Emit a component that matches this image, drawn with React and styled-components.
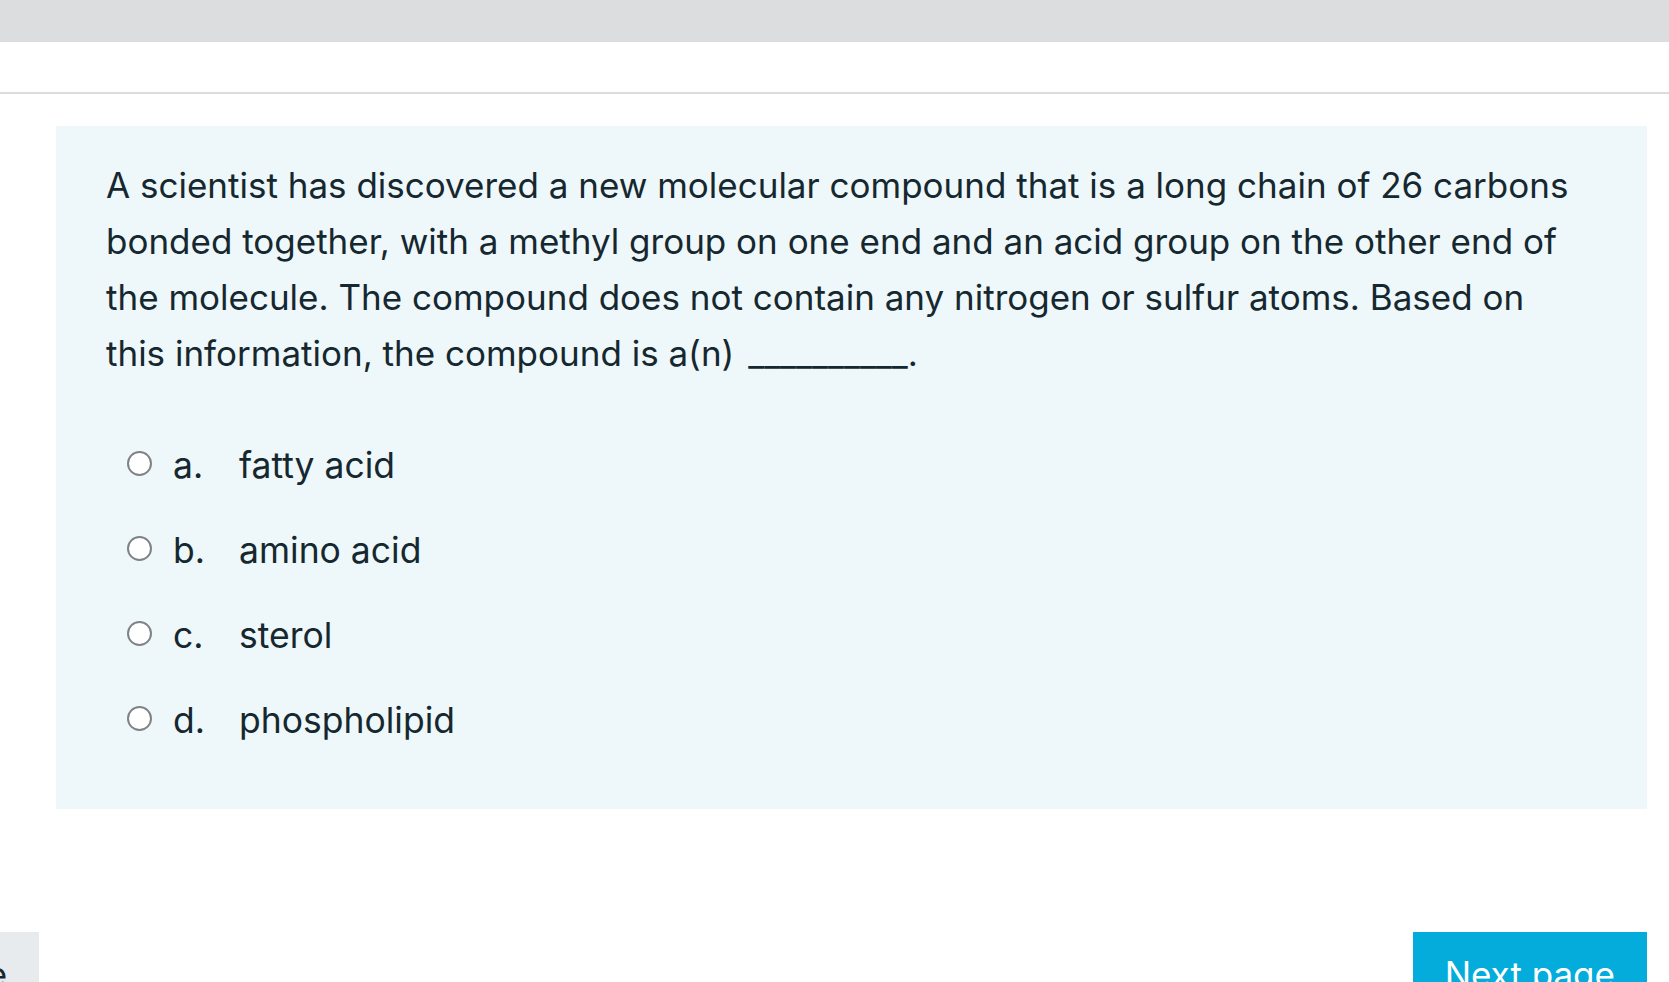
import React from "react";
import styled, { createGlobalStyle } from "styled-components";

const Global = createGlobalStyle`
  html, body {
    margin: 0;
    padding: 0;
    background: #ffffff;
    overflow: hidden;
  }
  body {
    font-family: Inter, "Noto Sans", "Liberation Sans", sans-serif;
    color: #16282f;
  }
  * { box-sizing: border-box; }
`;

const Page = styled.div`
  width: 1669px;
  height: 982px;
  display: flex;
  flex-direction: column;
  overflow: hidden;
`;

const TopBar = styled.div`
  height: 42px;
  flex: none;
  background: #dcdddf;
`;

const Header = styled.div`
  height: 52px;
  flex: none;
  background: #ffffff;
  border-bottom: 2px solid #dcdcdc;
`;

const Main = styled.main`
  padding: 32px 22px 0 56px;
  display: flex;
  flex-direction: column;
`;

const Card = styled.section`
  background: #eef7fa;
  height: 683px;
  padding: 31px 54px 0 50px;
`;

const QuestionText = styled.p`
  margin: 0;
  font-size: 35px;
  line-height: 56px;
  color: #16282f;
`;

const Blank = styled.span`
  margin-left: 4px;
`;

const Options = styled.div`
  margin-top: 42px;
  display: flex;
  flex-direction: column;
`;

const OptionRow = styled.label`
  height: 85px;
  display: flex;
  align-items: center;
  padding-left: 21px;
  font-size: 35.5px;
  color: #16282f;
`;

const Radio = styled.input.attrs({ type: "radio" })`
  appearance: none;
  -webkit-appearance: none;
  margin: -5px 21px 0 0;
  width: 25px;
  height: 25px;
  border: 2px solid #7f8386;
  border-radius: 50%;
  background: #ffffff;
  flex: none;
`;

const Number = styled.span`
  width: 66px;
  flex: none;
`;

const Footer = styled.div`
  margin-top: 123px;
  display: flex;
  justify-content: space-between;
  align-items: flex-start;
`;

const Button = styled.button`
  font-family: Inter, "Noto Sans", "Liberation Sans", sans-serif;
  font-size: 35px;
  line-height: 54px;
  padding: 15px 32px;
  border: none;
  border-radius: 0;
  background: ${(p) => (p.$primary ? "#04acdb" : "#e8ebee")};
  color: ${(p) => (p.$primary ? "#ffffff" : "#16282f")};
  white-space: nowrap;
`;

const PrevButton = styled(Button)`
  margin-left: -317px;
`;

const options = [
  ["a.", "fatty acid"],
  ["b.", "amino acid"],
  ["c.", "sterol"],
  ["d.", "phospholipid"],
];

export default function App() {
  return (
    <Page>
      <Global />
      <TopBar />
      <Header />
      <Main>
        <Card>
          <QuestionText>
            A scientist has discovered a new molecular compound that is a long
            chain of 26 carbons bonded together, with a methyl group on one end
            and an acid group on the other end of the molecule. The compound
            does not contain any nitrogen or sulfur atoms. Based on this
            information, the compound is a(n)<Blank> __________.</Blank>
          </QuestionText>
          <Options>
            {options.map(([n, t]) => (
              <OptionRow key={n}>
                <Radio name="answer" />
                <Number>{n}</Number>
                <span>{t}</span>
              </OptionRow>
            ))}
          </Options>
        </Card>
        <Footer>
          <PrevButton>Previous page</PrevButton>
          <Button $primary>Next page</Button>
        </Footer>
      </Main>
    </Page>
  );
}
